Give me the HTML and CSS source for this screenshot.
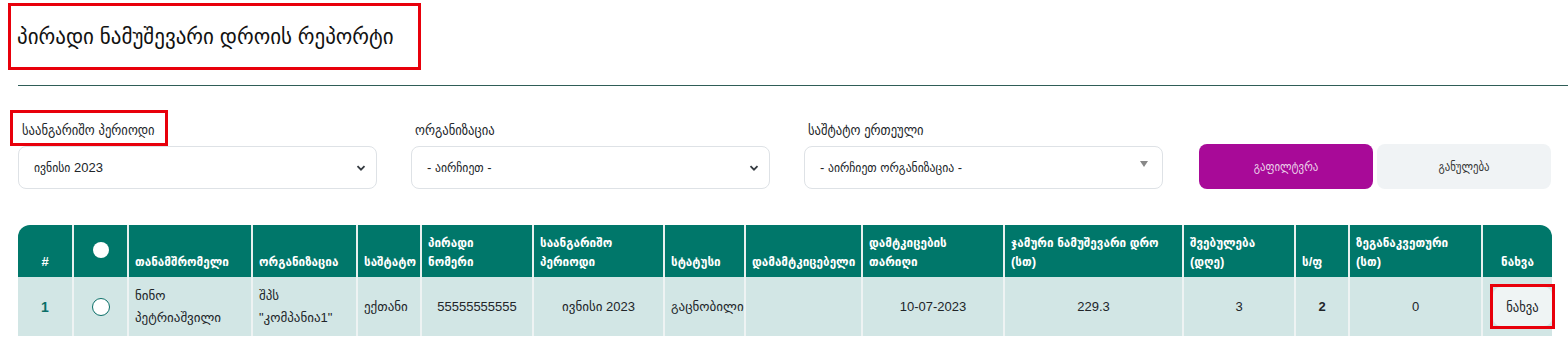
FILE: index.html
```html
<!DOCTYPE html>
<html>
<head>
    <title>პირადი ნამუშევარი დროის რეპორტი</title>
    <link rel="stylesheet" href="styles.css">
</head>
<body>
    <div class="title-box">
        <h1>პირადი ნამუშევარი დროის რეპორტი</h1>
    </div>
    <div class="divider"></div>

    <!-- Filters -->
    <div class="filters">
        <div class="field">
            <label class="marked">საანგარიშო პერიოდი</label>
            <div class="select">
                <span>ივნისი 2023</span>
                <svg width="10" height="10" viewBox="0 0 10 10"><path d="M1.5 3.2 L5 6.7 L8.5 3.2" fill="none" stroke="#343a40" stroke-width="1.8"/></svg>
            </div>
        </div>
        <div class="field">
            <label>ორგანიზაცია</label>
            <div class="select">
                <span>- აირჩიეთ -</span>
                <svg width="10" height="10" viewBox="0 0 10 10"><path d="M1.5 3.2 L5 6.7 L8.5 3.2" fill="none" stroke="#343a40" stroke-width="1.8"/></svg>
            </div>
        </div>
        <div class="field">
            <label>საშტატო ერთეული</label>
            <div class="select select-search">
                <span>- აირჩიეთ ორგანიზაცია -</span>
                <svg width="10" height="8" viewBox="0 0 10 8"><path d="M1 1 L9 1 L5 7 Z" fill="#888"/></svg>
            </div>
        </div>
        <div class="actions">
            <button class="btn btn-filter">გაფილტვრა</button>
            <button class="btn btn-reset">განულება</button>
        </div>
    </div>

    <!-- Report table -->
    <table class="report">
        <thead>
            <tr>
                <th class="c-num">#</th>
                <th class="c-radio"><span class="dot"></span></th>
                <th class="w-124">თანამშრომელი</th>
                <th class="w-105">ორგანიზაცია</th>
                <th class="w-64">საშტატო</th>
                <th class="w-112">პირადი<br>ნომერი</th>
                <th class="w-131">საანგარიშო<br>პერიოდი</th>
                <th class="w-81">სტატუსი</th>
                <th class="w-117">დამამტკიცებელი</th>
                <th class="w-142">დამტკიცების<br>თარიღი</th>
                <th class="w-179">ჯამური ნამუშევარი დრო<br>(სთ)</th>
                <th class="w-112">შვებულება<br>(დღე)</th>
                <th class="w-54">ს/ფ</th>
                <th class="w-133">ზეგანაკვეთური<br>(სთ)</th>
                <th class="c-view">ნახვა</th>
            </tr>
        </thead>
        <tbody>
            <tr>
                <td class="c-num">1</td>
                <td class="c-radio"><span class="radio"></span></td>
                <td>ნინო პეტრიაშვილი</td>
                <td>შპს "კომპანია1"</td>
                <td>ექთანი</td>
                <td class="center">55555555555</td>
                <td class="center">ივნისი 2023</td>
                <td>გაცნობილი</td>
                <td></td>
                <td class="center">10-07-2023</td>
                <td class="center">229.3</td>
                <td class="center">3</td>
                <td class="center strong">2</td>
                <td class="center">0</td>
                <td class="c-view"><span class="mark-box"><button class="btn-view">ნახვა</button></span></td>
            </tr>
        </tbody>
    </table>
</body>
</html>
```

FILE: styles.css
```css
* { box-sizing: border-box; }
body { margin: 0; font-family: "Liberation Sans", "DejaVu Sans Condensed", "DejaVu Sans", sans-serif; color: #212529; background: #fff; }

.title-box { display: flex; align-items: center; width: 413px; height: 67px; margin: 3px 0 0 8px; padding-left: 6px; border: 3px solid #e8000b; }
.title-box h1 { margin: 0; font-family: "Liberation Sans", "DejaVu Sans", sans-serif; font-size: 21px; font-weight: normal; color: #111; }
.divider { margin: 15px 0 0 18px; border-top: 1px solid #2f5d57; }

.filters { display: flex; align-items: flex-end; gap: 34px; margin: 24px 0 0 18px; }
.field { width: 359px; }
.field label { display: inline-block; padding: 10px 4px 6px; font-size: 14px; line-height: 20px; }
.field label.marked { margin-left: -8px; padding: 7px 10px 3px 9px; border: 3px solid #e8000b; }
.select { display: flex; align-items: center; justify-content: space-between; height: 43px; padding: 0 10px 0 15px; border: 1px solid #dee2e6; border-radius: 8px; font-size: 13px; color: #212529; }
.select-search svg { margin-top: -8px; margin-right: 3px; }

.actions { display: flex; gap: 4px; margin-left: 2px; }
.btn { width: 174px; height: 45px; border: none; border-radius: 8px; font-family: inherit; font-size: 12px; cursor: pointer; }
.btn-filter { background: #a80a98; color: #ecd3ea; }
.btn-reset { background: #f0f3f5; color: #333; }

.report { width: 1534px; margin: 36px 0 0 18px; border-collapse: separate; border-spacing: 0; table-layout: fixed; font-size: 13px; }
.report th { height: 52px; padding: 0 6px 6px; background: #00776a; color: #fff; font-weight: bold; text-align: left; vertical-align: bottom; line-height: 19px; border-left: 2px solid #e9f0ef; }
.report td { height: 59px; padding: 0 6px; background: #d2e6e5; font-family: "Liberation Sans", "DejaVu Sans", sans-serif; vertical-align: middle; line-height: 22px; border-left: 2px solid #eef3f3; }
.report th:first-child, .report td:first-child { border-left: none; }
.report th:first-child { border-top-left-radius: 12px; }
.report th:last-child { border-top-right-radius: 12px; }
.report th.c-num, .report th.c-radio, .report th.c-view { text-align: center; }

.c-num { width: 54px; text-align: center; }
.c-radio { width: 55px; text-align: center; }
.c-view { width: 71px; }
.report td.c-num { color: #0b6f68; font-weight: bold; font-size: 14px; }
.w-54 { width: 54px; }
.w-64 { width: 64px; }
.w-81 { width: 81px; }
.w-105 { width: 105px; }
.w-112 { width: 112px; }
.w-117 { width: 117px; }
.w-124 { width: 124px; }
.w-131 { width: 131px; }
.w-133 { width: 133px; }
.w-142 { width: 142px; }
.w-179 { width: 179px; }
.center { text-align: center; }
.strong { font-weight: bold; }

.dot { display: inline-block; width: 16px; height: 16px; margin-bottom: 8px; border-radius: 50%; background: #fff; }
.radio { display: inline-block; width: 18px; height: 18px; border: 1px solid #0b6f68; border-radius: 50%; background: #fff; vertical-align: middle; }

.report td.c-view { padding: 0 0 0 7px; text-align: left; }
.mark-box { display: inline-block; margin-right: -5px; border: 3px solid #e8000b; line-height: 0; }
.btn-view { width: 59px; height: 39px; border: none; border-radius: 8px; background: #eff4f4; font-family: "Liberation Sans", "DejaVu Sans Condensed", sans-serif; font-size: 14px; color: #212529; }
```
